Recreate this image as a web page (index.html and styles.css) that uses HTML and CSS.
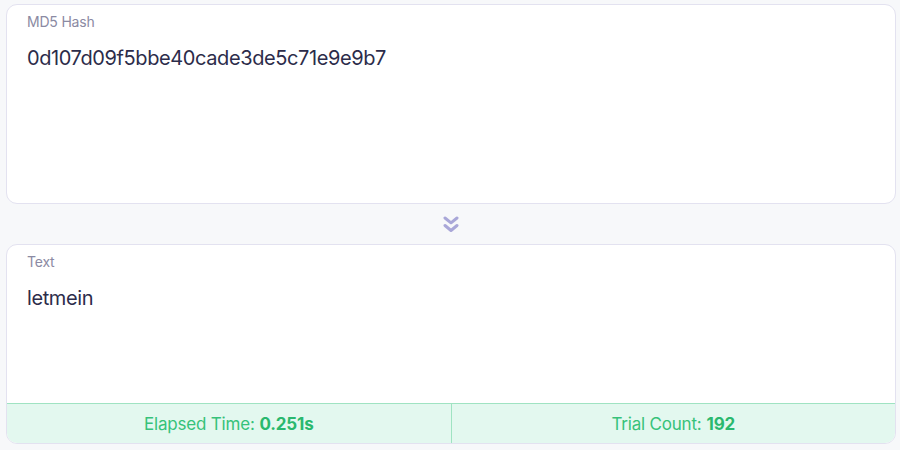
FILE: index.html
```html
<!DOCTYPE html>
<html>
<head>
<meta charset="utf-8">
<link rel="stylesheet" href="styles.css">
</head>
<body>
<div class="page">
  <section class="card">
    <div class="label">MD5 Hash</div>
    <div class="value">0d107d09f5bbe40cade3de5c71e9e9b7</div>
  </section>
  <div class="arrow">
    <svg width="16" height="17" viewBox="0 0 16 17" fill="none" stroke="#a9a7d8" stroke-width="3" stroke-linecap="round" stroke-linejoin="round">
      <path d="M2 2 L8 6.8 L14 2"/>
      <path d="M2 9.5 L8 14.5 L14 9.5"/>
    </svg>
  </div>
  <section class="card card-result">
    <div class="label">Text</div>
    <div class="value">letmein</div>
    <div class="stats">
      <div class="stat">Elapsed Time: <b>0.251s</b></div>
      <div class="stat">Trial Count: <b>192</b></div>
    </div>
  </section>
</div>
</body>
</html>
```
FILE: styles.css
```css
html, body {
  margin: 0;
  padding: 0;
  background: #f7f8fa;
}
body {
  font-family: Inter, "Noto Sans", sans-serif;
}
.page {
  padding: 4px 4px 6px 6px;
  display: flex;
  flex-direction: column;
}
.card {
  box-sizing: border-box;
  width: 890px;
  height: 200px;
  background: #ffffff;
  border: 1px solid #e3e2f0;
  border-radius: 11px;
  display: flex;
  flex-direction: column;
  overflow: hidden;
}
.label {
  padding: 8px 20px 0 20px;
  font-size: 14px;
  line-height: 18px;
  color: #8b8aa3;
  letter-spacing: -0.2px;
}
.value {
  padding: 15px 20px 0 20px;
  font-size: 20px;
  line-height: 24px;
  color: #2c2c4a;
  letter-spacing: -0.4px;
}
.arrow {
  height: 40px;
  display: flex;
  align-items: center;
  justify-content: center;
}
.stats {
  margin-top: auto;
  height: 40px;
  display: flex;
  background: #e3f8ef;
  border-top: 1px solid #9fe3c2;
  box-sizing: border-box;
}
.stat {
  flex: 1;
  display: flex;
  align-items: center;
  justify-content: center;
  font-size: 17px;
  color: #36c27a;
  letter-spacing: -0.2px;
}
.stat + .stat {
  border-left: 1px solid #9fe3c2;
}
.stat b {
  font-weight: 700;
  margin-left: 5px;
  color: #2ab86e;
}
```
